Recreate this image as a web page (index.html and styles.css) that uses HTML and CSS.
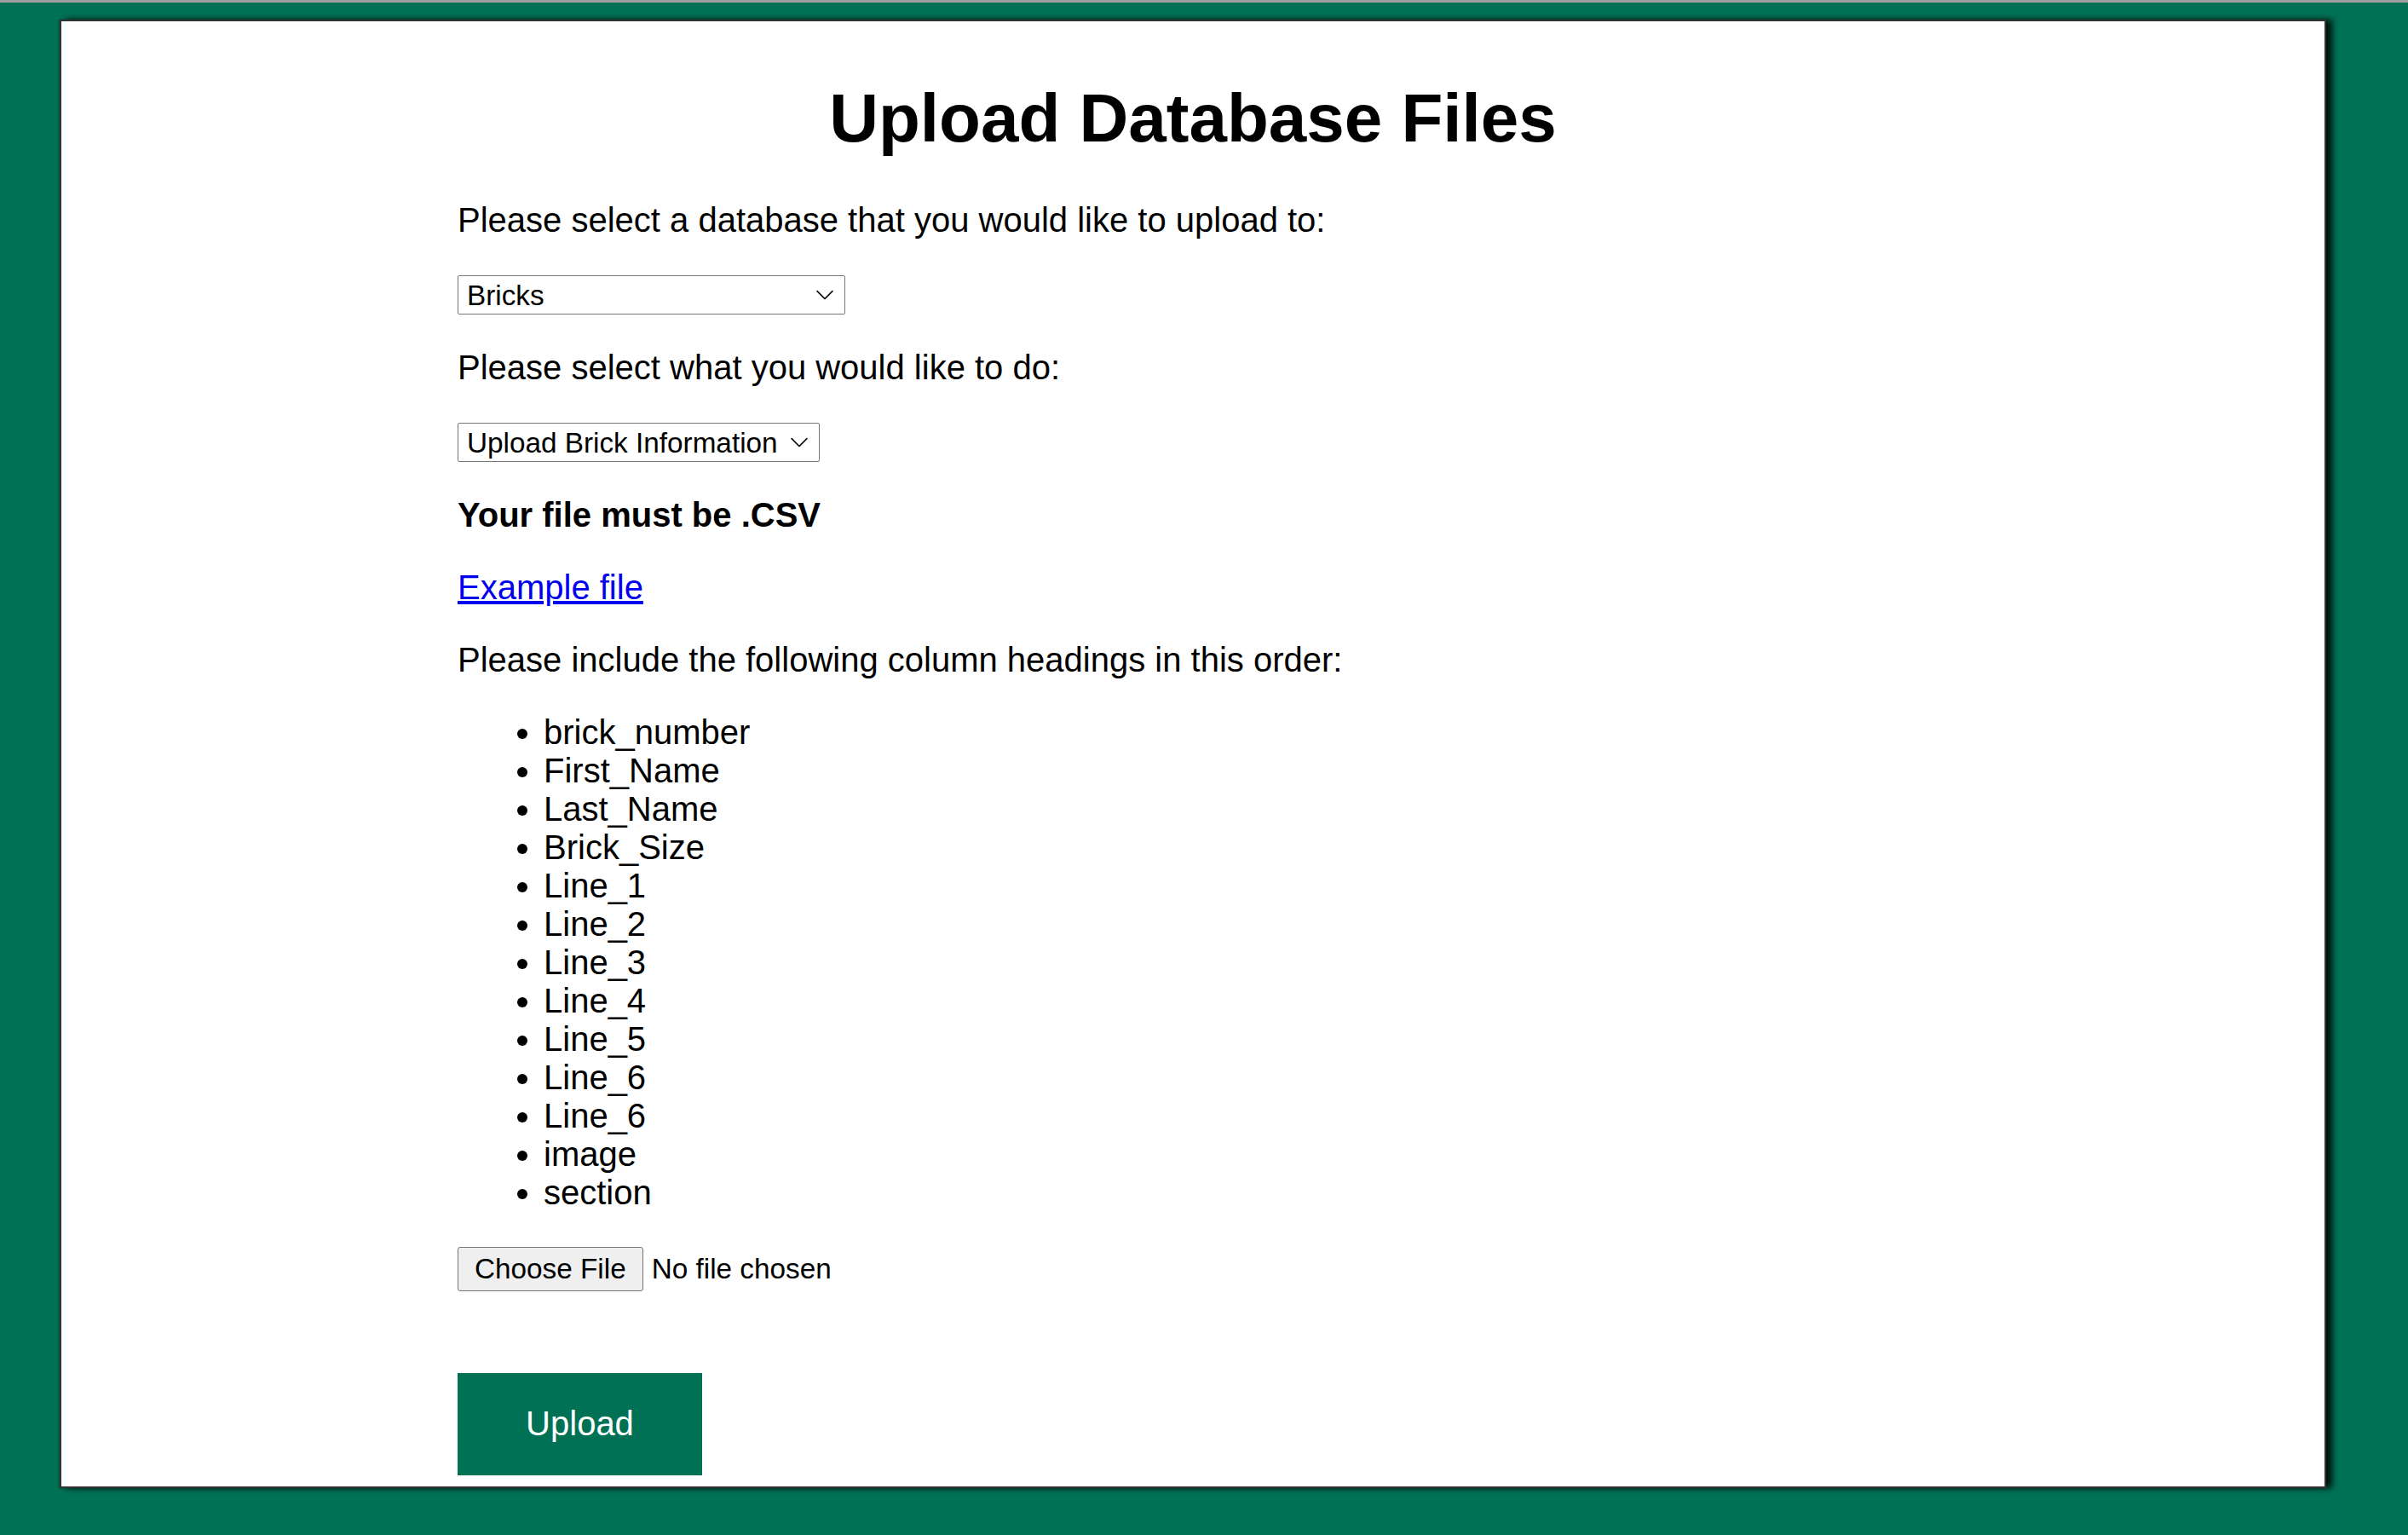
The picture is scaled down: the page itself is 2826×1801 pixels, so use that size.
FILE: index.html
```html
<!DOCTYPE html>
<html lang="en">
<head>
<meta charset="utf-8">
<title>Upload Database Files</title>
<link rel="stylesheet" href="styles.css">
</head>
<body>
<div class="topbar"></div>
<div class="panel">
  <h1 class="title">Upload Database Files</h1>
  <form class="form">
    <p class="text">Please select a database that you would like to upload to:</p>
    <div class="select-wrap">
      <select class="select select-db">
        <option>Bricks</option>
      </select>
      <svg class="chevron" viewBox="0 0 20 11" aria-hidden="true"><polyline points="0.6,0.6 10,10 19.4,0.6" fill="none" stroke="#111" stroke-width="1.7"/></svg>
    </div>
    <p class="text">Please select what you would like to do:</p>
    <div class="select-wrap">
      <select class="select select-action">
        <option>Upload Brick Information</option>
      </select>
      <svg class="chevron" viewBox="0 0 20 11" aria-hidden="true"><polyline points="0.6,0.6 10,10 19.4,0.6" fill="none" stroke="#111" stroke-width="1.7"/></svg>
    </div>
    <p class="text text-bold">Your file must be .CSV</p>
    <p class="text"><a class="link" href="#">Example file</a></p>
    <p class="text">Please include the following column headings in this order:</p>
    <ul class="columns">
      <li>brick_number</li>
      <li>First_Name</li>
      <li>Last_Name</li>
      <li>Brick_Size</li>
      <li>Line_1</li>
      <li>Line_2</li>
      <li>Line_3</li>
      <li>Line_4</li>
      <li>Line_5</li>
      <li>Line_6</li>
      <li>Line_6</li>
      <li>image</li>
      <li>section</li>
    </ul>
    <div class="file-row">
      <label class="file-btn">Choose File<input class="file-input" type="file"></label>
      <span class="file-name">No file chosen</span>
    </div>
    <button class="upload-btn" type="button">Upload</button>
  </form>
</div>
</body>
</html>
```

FILE: styles.css
```css
html, body {
  margin: 0;
  padding: 0;
  background: #007155;
}

body {
  font-family: "Liberation Sans", Arial, sans-serif;
  color: #000;
  min-height: 1801px;
}

.topbar {
  height: 3px;
  background: #a0a0a0;
}

.panel {
  box-sizing: border-box;
  width: 2660px;
  margin: 20px 0 0 70px;
  border: 2px solid #333;
  background: #fff;
  padding-bottom: 13px;
  box-shadow: 7px 0 7px rgba(0, 0, 0, 0.85), -1px 0 3px rgba(0, 0, 0, 0.3);
}

.title {
  margin: 66.8px 0 0;
  font-size: 80px;
  line-height: 93px;
  font-weight: bold;
  text-align: center;
}

.form {
  display: flex;
  flex-direction: column;
  align-items: flex-start;
  gap: 40px;
  margin: 51.2px 0 0;
  padding-left: 465px;
  font-size: 40px;
  line-height: 45px;
}

.text {
  margin: 0;
}

.text-bold {
  font-weight: bold;
}

.link {
  color: #0000ee;
  text-decoration: underline;
}

.select-wrap {
  position: relative;
  margin-top: 2.5px;
}

.select {
  display: block;
  box-sizing: border-box;
  height: 45.5px;
  margin: 0;
  padding: 0 0 0 10px;
  border: 1px solid #767676;
  border-radius: 2px;
  background: #fff;
  color: #000;
  font-family: "Liberation Sans", Arial, sans-serif;
  font-size: 33.3px;
  appearance: none;
  -webkit-appearance: none;
}

.select-db {
  width: 455px;
}

.select-action {
  width: 425px;
}

.chevron {
  position: absolute;
  right: 14px;
  top: 50%;
  width: 20px;
  height: 11px;
  transform: translateY(-50%);
  pointer-events: none;
}

.columns {
  margin: 0;
  padding-left: 101px;
  list-style: disc;
}

.file-row {
  display: flex;
  align-items: center;
  margin-top: 1px;
  font-size: 33.3px;
  line-height: normal;
}

.file-btn {
  box-sizing: border-box;
  display: inline-flex;
  align-items: center;
  height: 52.4px;
  padding: 0 19px;
  border: 1px solid #767676;
  border-radius: 3px;
  background: #efefef;
  color: #000;
}

.file-input {
  display: none;
}

.file-name {
  margin-left: 10px;
}

.upload-btn {
  width: 287px;
  height: 120px;
  margin-top: 55.3px;
  padding: 0;
  border: none;
  background: #007155;
  color: #fff;
  font-family: "Liberation Sans", Arial, sans-serif;
  font-size: 40px;
}
```
